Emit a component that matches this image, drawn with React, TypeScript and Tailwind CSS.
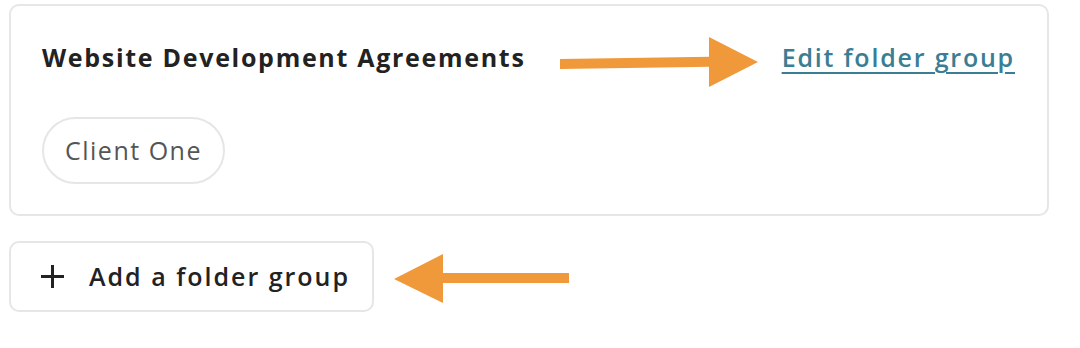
function Arrow({ dir, className }: { dir: 'left' | 'right'; className: string }) {
  // fat callout arrow: shaft + triangle head
  return (
    <svg className={className} viewBox="0 0 200 52" fill="#f0993a">
      {dir === 'right' ? (
        <>
          <polygon points="0,22 151,19.7 151,29.7 0,32" />
          <polygon points="149,0 198,25 149,50" />
        </>
      ) : (
        <>
          <polygon points="48,20 175,20 175,30 48,30" />
          <polygon points="0,26 49,1 49,50" />
        </>
      )}
    </svg>
  )
}

export default function App() {
  return (
    <div className="relative w-[1080px] h-[348px] bg-white font-['Open_Sans',sans-serif] tracking-[1.8px] pt-[4px] pl-[9px]">
      <div className="w-[1040px] h-[212px] rounded-[10px] border-2 border-[#e6e6e6] px-[31px] pt-[35px]">
        <div className="flex items-center justify-between pr-[1px]">
          <h2 className="text-[25px] leading-[32px] font-bold tracking-[1.7px] text-[#222]">
            Website Development Agreements
          </h2>
          <a href="#" className="text-[25px] leading-[32px] font-semibold text-[#3b7d93] underline underline-offset-[5px] decoration-2">
            Edit folder group
          </a>
        </div>
        <div className="mt-[44px] flex">
          <span className="inline-flex items-center h-[67px] rounded-full border-2 border-[#e6e6e6] px-[21px] text-[25px] tracking-[1.5px] text-[#555]">
            Client One
          </span>
        </div>
      </div>
      <button className="mt-[25px] flex items-center h-[71px] w-[365px] rounded-[10px] border-2 border-[#e6e6e6] pl-[30px] text-[25px] font-semibold tracking-[2px] text-[#222]">
        <svg width="23" height="23" viewBox="0 0 23 23" className="mr-[25px]" stroke="#222" strokeWidth="3">
          <line x1="11.5" y1="0" x2="11.5" y2="23" />
          <line x1="0" y1="11.5" x2="23" y2="11.5" />
        </svg>
        Add a folder group
      </button>
      <Arrow dir="right" className="absolute left-[560px] top-[37px] w-[200px] h-[52px]" />
      <Arrow dir="left" className="absolute left-[394px] top-[253px] w-[200px] h-[52px]" />
    </div>
  )
}
